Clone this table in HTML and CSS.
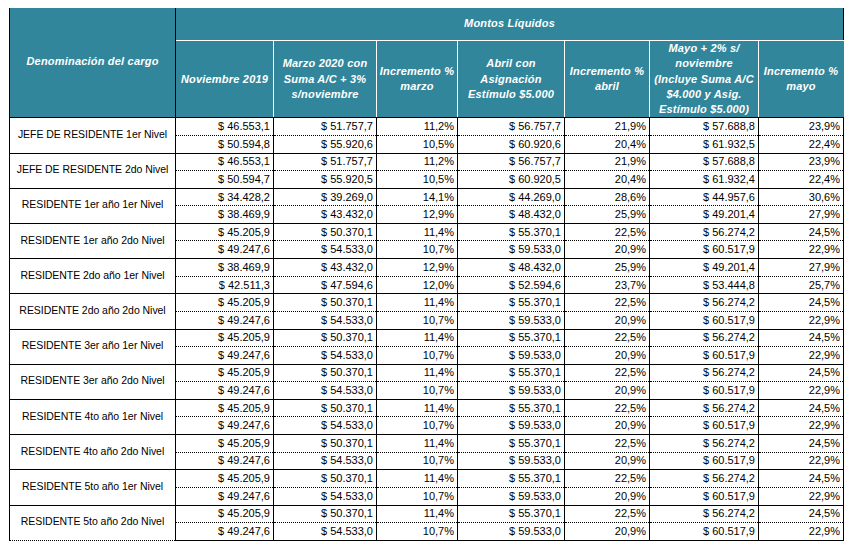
FILE: index.html
```html
<!DOCTYPE html>
<html lang="es">
<head>
<meta charset="utf-8">
<title>Montos Líquidos</title>
<link rel="stylesheet" href="styles.css">
</head>
<body>
<table class="sheet">
  <colgroup>
    <col class="c1"><col class="c2"><col class="c3"><col class="c4"><col class="c5"><col class="c6"><col class="c7"><col class="c8">
  </colgroup>
  <thead>
    <tr class="h1">
      <th rowspan="2" class="hname">Denominación del cargo</th>
      <th colspan="7" class="hspan">Montos Líquidos</th>
    </tr>
    <tr class="h2">
      <th>Noviembre 2019</th>
      <th>Marzo 2020 con<br>Suma A/C + 3%<br>s/noviembre</th>
      <th>Incremento %<br>marzo</th>
      <th>Abril con<br>Asignación<br>Estímulo $5.000</th>
      <th>Incremento %<br>abril</th>
      <th>Mayo + 2% s/<br>noviembre<br>(Incluye Suma A/C<br>$4.000 y Asig.<br>Estímulo $5.000)</th>
      <th class="hlast">Incremento %<br>mayo</th>
    </tr>
  </thead>
  <tbody>
    <tr class="a"><td rowspan="2" class="name">JEFE DE RESIDENTE 1er Nivel</td><td>$ 46.553,1</td><td>$ 51.757,7</td><td>11,2%</td><td>$ 56.757,7</td><td>21,9%</td><td>$ 57.688,8</td><td>23,9%</td></tr>
    <tr class="b"><td>$ 50.594,8</td><td>$ 55.920,6</td><td>10,5%</td><td>$ 60.920,6</td><td>20,4%</td><td>$ 61.932,5</td><td>22,4%</td></tr>
    <tr class="a"><td rowspan="2" class="name">JEFE DE RESIDENTE 2do Nivel</td><td>$ 46.553,1</td><td>$ 51.757,7</td><td>11,2%</td><td>$ 56.757,7</td><td>21,9%</td><td>$ 57.688,8</td><td>23,9%</td></tr>
    <tr class="b"><td>$ 50.594,7</td><td>$ 55.920,5</td><td>10,5%</td><td>$ 60.920,5</td><td>20,4%</td><td>$ 61.932,4</td><td>22,4%</td></tr>
    <tr class="a"><td rowspan="2" class="name">RESIDENTE 1er año 1er Nivel</td><td>$ 34.428,2</td><td>$ 39.269,0</td><td>14,1%</td><td>$ 44.269,0</td><td>28,6%</td><td>$ 44.957,6</td><td>30,6%</td></tr>
    <tr class="b"><td>$ 38.469,9</td><td>$ 43.432,0</td><td>12,9%</td><td>$ 48.432,0</td><td>25,9%</td><td>$ 49.201,4</td><td>27,9%</td></tr>
    <tr class="a"><td rowspan="2" class="name">RESIDENTE 1er año 2do Nivel</td><td>$ 45.205,9</td><td>$ 50.370,1</td><td>11,4%</td><td>$ 55.370,1</td><td>22,5%</td><td>$ 56.274,2</td><td>24,5%</td></tr>
    <tr class="b"><td>$ 49.247,6</td><td>$ 54.533,0</td><td>10,7%</td><td>$ 59.533,0</td><td>20,9%</td><td>$ 60.517,9</td><td>22,9%</td></tr>
    <tr class="a"><td rowspan="2" class="name">RESIDENTE 2do año 1er Nivel</td><td>$ 38.469,9</td><td>$ 43.432,0</td><td>12,9%</td><td>$ 48.432,0</td><td>25,9%</td><td>$ 49.201,4</td><td>27,9%</td></tr>
    <tr class="b"><td>$ 42.511,3</td><td>$ 47.594,6</td><td>12,0%</td><td>$ 52.594,6</td><td>23,7%</td><td>$ 53.444,8</td><td>25,7%</td></tr>
    <tr class="a"><td rowspan="2" class="name">RESIDENTE 2do año 2do Nivel</td><td>$ 45.205,9</td><td>$ 50.370,1</td><td>11,4%</td><td>$ 55.370,1</td><td>22,5%</td><td>$ 56.274,2</td><td>24,5%</td></tr>
    <tr class="b"><td>$ 49.247,6</td><td>$ 54.533,0</td><td>10,7%</td><td>$ 59.533,0</td><td>20,9%</td><td>$ 60.517,9</td><td>22,9%</td></tr>
    <tr class="a"><td rowspan="2" class="name">RESIDENTE 3er año 1er Nivel</td><td>$ 45.205,9</td><td>$ 50.370,1</td><td>11,4%</td><td>$ 55.370,1</td><td>22,5%</td><td>$ 56.274,2</td><td>24,5%</td></tr>
    <tr class="b"><td>$ 49.247,6</td><td>$ 54.533,0</td><td>10,7%</td><td>$ 59.533,0</td><td>20,9%</td><td>$ 60.517,9</td><td>22,9%</td></tr>
    <tr class="a"><td rowspan="2" class="name">RESIDENTE 3er año 2do Nivel</td><td>$ 45.205,9</td><td>$ 50.370,1</td><td>11,4%</td><td>$ 55.370,1</td><td>22,5%</td><td>$ 56.274,2</td><td>24,5%</td></tr>
    <tr class="b"><td>$ 49.247,6</td><td>$ 54.533,0</td><td>10,7%</td><td>$ 59.533,0</td><td>20,9%</td><td>$ 60.517,9</td><td>22,9%</td></tr>
    <tr class="a"><td rowspan="2" class="name">RESIDENTE 4to año 1er Nivel</td><td>$ 45.205,9</td><td>$ 50.370,1</td><td>11,4%</td><td>$ 55.370,1</td><td>22,5%</td><td>$ 56.274,2</td><td>24,5%</td></tr>
    <tr class="b"><td>$ 49.247,6</td><td>$ 54.533,0</td><td>10,7%</td><td>$ 59.533,0</td><td>20,9%</td><td>$ 60.517,9</td><td>22,9%</td></tr>
    <tr class="a"><td rowspan="2" class="name">RESIDENTE 4to año 2do Nivel</td><td>$ 45.205,9</td><td>$ 50.370,1</td><td>11,4%</td><td>$ 55.370,1</td><td>22,5%</td><td>$ 56.274,2</td><td>24,5%</td></tr>
    <tr class="b"><td>$ 49.247,6</td><td>$ 54.533,0</td><td>10,7%</td><td>$ 59.533,0</td><td>20,9%</td><td>$ 60.517,9</td><td>22,9%</td></tr>
    <tr class="a"><td rowspan="2" class="name">RESIDENTE 5to año 1er Nivel</td><td>$ 45.205,9</td><td>$ 50.370,1</td><td>11,4%</td><td>$ 55.370,1</td><td>22,5%</td><td>$ 56.274,2</td><td>24,5%</td></tr>
    <tr class="b"><td>$ 49.247,6</td><td>$ 54.533,0</td><td>10,7%</td><td>$ 59.533,0</td><td>20,9%</td><td>$ 60.517,9</td><td>22,9%</td></tr>
    <tr class="a"><td rowspan="2" class="name">RESIDENTE 5to año 2do Nivel</td><td>$ 45.205,9</td><td>$ 50.370,1</td><td>11,4%</td><td>$ 55.370,1</td><td>22,5%</td><td>$ 56.274,2</td><td>24,5%</td></tr>
    <tr class="b"><td>$ 49.247,6</td><td>$ 54.533,0</td><td>10,7%</td><td>$ 59.533,0</td><td>20,9%</td><td>$ 60.517,9</td><td>22,9%</td></tr>
  </tbody>
</table>
</body>
</html>
```
FILE: styles.css
```css
html, body {
  margin: 0;
  padding: 0;
  background: #ffffff;
}
body {
  padding: 8px 0 0 9px;
}
.sheet {
  border-collapse: collapse;
  table-layout: fixed;
  width: 835px;
  font-family: "Liberation Sans", Arial, sans-serif;
  color: #000;
}
.c1 { width: 166px; }
.c2 { width: 98px; }
.c3 { width: 103px; }
.c4 { width: 81px; }
.c5 { width: 107px; }
.c6 { width: 85px; }
.c7 { width: 109px; }
.c8 { width: 85px; }

.sheet th {
  background: #31869b;
  color: #ffffff;
  font-weight: bold;
  font-style: italic;
  font-size: 11px;
  letter-spacing: 0.2px;
  line-height: 15.3px;
  text-align: center;
  vertical-align: middle;
  padding: 0 1px;
  border: 1px solid #ffffff;
}
.sheet .h1 th {
  border-top: none;
}
.sheet .hname {
  border-left: 1px solid #000;
  border-right: 1px solid #000;
  border-bottom: 1px solid #000;
  padding-bottom: 2px;
}
.sheet .hspan {
  height: 32px;
  border-right: 1px solid #000;
}
.sheet .h2 th {
  height: 76px;
  border-bottom: 1px solid #000;
}
.sheet .h2 .hlast {
  border-right: 1px solid #31869b;
}

.sheet td {
  font-size: 11px;
  line-height: 13px;
  padding: 0 3px 0 2px;
  text-align: right;
  vertical-align: middle;
  border-left: 1px solid #000;
  border-right: 1px solid #000;
  white-space: nowrap;
  overflow: hidden;
}
.sheet tr.a td {
  height: 16.4px;
  border-top: 1px solid #000;
  border-bottom: 1px dotted #000;
}
.sheet tr.b td {
  height: 16.8px;
  border-bottom: 1px solid #000;
}
.sheet td.name {
  text-align: center;
  font-size: 10.5px;
  letter-spacing: -0.05px;
  padding: 0 2px 2px;
  border-bottom: 1px solid #000;
}
```
